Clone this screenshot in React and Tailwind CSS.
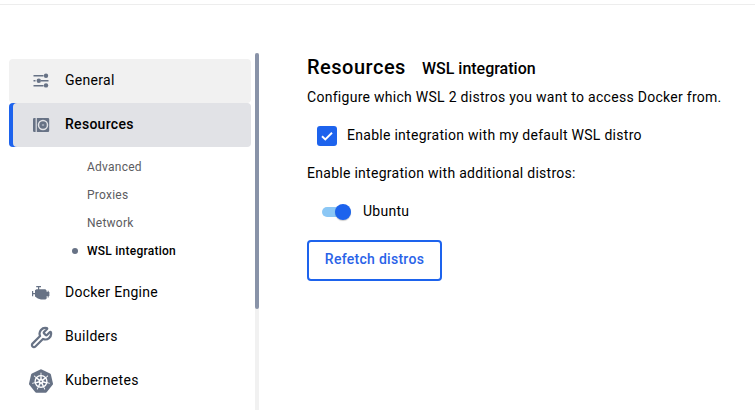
import React from "react";
import { SiKubernetes } from "react-icons/si";
import { Wrench } from "lucide-react";

const SlidersIcon = () => (
  <svg width="24" height="24" viewBox="0 0 24 24" fill="#677285">
    <path d="M4.500 6h10v1.600h-10zM4.500 11h2v1.600h-2zM12 11h7.500v1.600H12zM4.500 16h10v1.600h-10z" />
    <circle cx="17" cy="6.800" r="2.200" />
    <circle cx="9.800" cy="11.800" r="2.200" />
    <circle cx="17" cy="16.400" r="2.200" />
  </svg>
);

const DriveIcon = () => (
  <svg width="24" height="24" viewBox="0 0 24 24" fill="#677285">
    <path d="M5.200 5H6.600v14H5.200A1.200 1.200 0 0 1 4 17.800V6.200A1.200 1.200 0 0 1 5.200 5z" />
    <path d="M7.800 5H19a1.200 1.200 0 0 1 1.200 1.200v11.600A1.200 1.200 0 0 1 19 19H7.800z" />
    <circle cx="14" cy="12" r="4.500" fill="none" stroke="#e1e2e6" strokeWidth="1.500" />
    <path d="M12.900 11.400h2.200v1.200h-2.200z" fill="#c2c7d0" />
  </svg>
);

const EngineIcon = () => (
  <svg width="24" height="24" viewBox="0 0 24 24" fill="#677285">
    <path d="M7.200 5h4.800v1.200h-1.800V8.300H16.400l1.300 1.400v1.300h.9V9.800h1.100v1.300h.7v4h-.7v1.400h-1.100v-1.400h-.9V17.600l-1.300 1H12L8.800 17.400 6 15.400V13.300H4.200v1.900H3V10h1.200v2H6V9.300L7.400 8.300H9V6.200H7.200z" />
  </svg>
);

const WrenchIcon = () => <Wrench size={23} strokeWidth={2.300} color="#677285" />;
const WheelIcon = () => <SiKubernetes size={24} color="#677285" />;

function NavItem({ icon: Icon, label, className = "" }) {
  return (
    <div className={`flex h-[44px] items-center rounded text-[14px] tracking-[0.29px] ${className}`}>
      <span className="flex w-[64px] shrink-0 justify-center">
        <Icon />
      </span>
      <span className="-ml-2 -mt-px">{label}</span>
    </div>
  );
}

function SubItem({ label, active }) {
  return (
    <div className={`flex h-[28px] items-center text-[12px] ${active ? "font-medium text-black tracking-[0.25px]" : "text-[#5c5c61] tracking-[0.25px]"}`}>
      <span className={`ml-[63px] mr-[9px] size-[6px] rounded-full ${active ? "bg-[#677285]" : ""}`} />
      {label}
    </div>
  );
}

export default function App() {
  return (
    <div className="h-[410px] w-[755px] overflow-hidden bg-white font-['Roboto',sans-serif] text-black">
      <div className="h-[5px] border-b border-[#ededed]" />
      <div className="flex pt-[48px]">
        <nav className="w-[255px] shrink-0 pl-[9px] pr-1 pt-[6px]">
          <NavItem icon={SlidersIcon} label="General" className="bg-[#f1f1f1]" />
          <NavItem
            icon={DriveIcon}
            label="Resources"
            className="bg-[#e1e2e6] font-medium shadow-[inset_4px_0_0_#1d63ed]"
          />
          <div className="py-[6px]">
            <SubItem label="Advanced" />
            <SubItem label="Proxies" />
            <SubItem label="Network" />
            <SubItem label="WSL integration" active />
          </div>
          <NavItem icon={EngineIcon} label="Docker Engine" />
          <NavItem icon={WrenchIcon} label="Builders" />
          <NavItem icon={WheelIcon} label="Kubernetes" />
        </nav>
        <div className="h-[357px] w-1 shrink-0 bg-[#f1f1f1]">
          <div className="h-[256px] rounded-[2px] bg-[#8993a8]" />
        </div>
        <main className="pl-[48px] text-[14px] tracking-[0.28px]">
          <h1 className="flex items-baseline gap-4 leading-[28px]">
            <span className="text-[20px] font-medium tracking-[0.5px]">Resources</span>
            <span className="text-[16px] font-medium tracking-[0]">WSL integration</span>
          </h1>
          <p className="mt-1 leading-5">Configure which WSL 2 distros you want to access Docker from.</p>
          <label className="ml-[10px] mt-[19px] flex h-5 items-center gap-[10px]">
            <span className="flex size-5 items-center justify-center rounded-[3px] bg-[#1d63ed]">
              <svg width="20" height="20" viewBox="0 0 20 20" fill="none" stroke="#fff" strokeWidth="1.900">
                <path d="m5 10.200 3.300 3.200 6.700-6.600" />
              </svg>
            </span>
            <span className="-mt-px">Enable integration with my default WSL distro</span>
          </label>
          <p className="mt-[17px] leading-5">Enable integration with additional distros:</p>
          <label className="ml-[15px] mt-[21px] flex h-4 items-center">
            <span className="mr-3 flex h-[10px] w-[29px] items-center justify-end rounded-full bg-[#8bc7f5]">
              <span className="size-4 rounded-full bg-[#1d63ed] shadow-[0_1px_1px_rgba(0,0,0,0.2)]" />
            </span>
            <span className="-mt-[2px]">Ubuntu</span>
          </label>
          <button className="mt-[20px] flex h-[41px] w-[135px] items-center justify-center rounded border-2 border-[#1d63ed] pb-[3px] font-medium tracking-[0.28px] text-[#2a63e8]">
            Refetch distros
          </button>
        </main>
      </div>
    </div>
  );
}
